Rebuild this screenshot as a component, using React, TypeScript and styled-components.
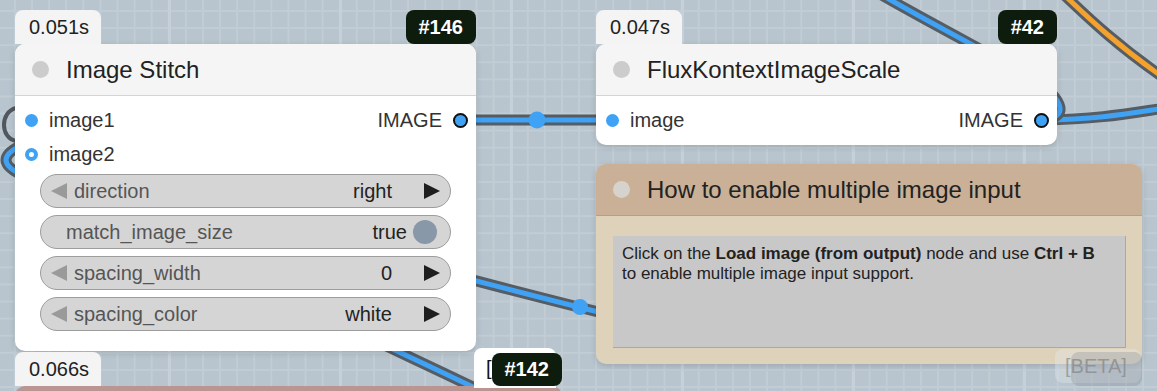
import styled, { createGlobalStyle } from "styled-components";

const GlobalStyle = createGlobalStyle`
	html, body {
		margin: 0;
		padding: 0;
		background: #b8c5ce;
	}
	* {
		box-sizing: border-box;
	}
`;

const Canvas = styled.div`
	position: relative;
	width: 1157px;
	height: 391px;
	overflow: hidden;
	font-family: "Liberation Sans", Arial, sans-serif;
	background-color: #b8c5ce;
	background-image:
		linear-gradient(to right, #c5d0d8 3px, transparent 3px),
		linear-gradient(to right, #c1ccd4 2px, transparent 2px),
		linear-gradient(to bottom, #c1ccd4 2px, transparent 2px);
	background-size: 171px 100%, 17.1px 17.1px, 17.1px 17.1px;
	background-position: 510px 0, 14px 0, 0 10px;
`;

const WireLayer = styled.svg`
	position: absolute;
	inset: 0;
	width: 100%;
	height: 100%;
`;

const Node = styled.div<{ $x: number; $y: number; $w: number }>`
	position: absolute;
	left: ${(p) => p.$x}px;
	top: ${(p) => p.$y}px;
	width: ${(p) => p.$w}px;
	display: flex;
	flex-direction: column;
`;

const BadgeRow = styled.div`
	position: relative;
	display: flex;
	justify-content: space-between;
	align-items: flex-end;
	height: 34px;
`;

const TimeBadge = styled.div`
	display: flex;
	align-items: center;
	height: 34px;
	padding: 0 12px 0 14px;
	background: #f4f4f4;
	color: #222;
	font-size: 20px;
	border-radius: 8px 8px 0 0;
`;

const IdBadge = styled.div<{ $h?: number }>`
	position: relative;
	z-index: 2;
	display: flex;
	align-items: center;
	height: ${(p) => p.$h ?? 34}px;
	padding: 0 13px;
	background: #0e1c0e;
	color: #fff;
	font-size: 20px;
	font-weight: 700;
	border-radius: 8px;
`;

const HiddenBadge = styled.div`
	position: absolute;
	right: 6px;
	top: -4px;
	height: 40px;
	width: 82px;
	padding: 0 12px;
	display: flex;
	align-items: center;
	background: #fff;
	color: #111;
	font-size: 20px;
	border-radius: 8px 8px 0 0;
`;

const Card = styled.div<{ $bg?: string }>`
	background: ${(p) => p.$bg ?? "#fff"};
	border-radius: 10px;
	overflow: hidden;
	box-shadow: 0 2px 6px rgba(0, 0, 0, 0.15);
`;

const TitleBar = styled.div<{ $bg?: string; $line?: string }>`
	display: flex;
	align-items: center;
	height: 52px;
	padding-left: 17px;
	gap: 17px;
	background: ${(p) => p.$bg ?? "#f5f5f5"};
	border-bottom: 1.5px solid ${(p) => p.$line ?? "#d4d4d4"};
	color: #222;
	font-size: 24px;
`;

const StatusDot = styled.span<{ $c?: string }>`
	width: 17px;
	height: 17px;
	border-radius: 50%;
	background: ${(p) => p.$c ?? "#cccccc"};
	flex-shrink: 0;
`;

const Body = styled.div<{ $pb: number }>`
	display: flex;
	flex-direction: column;
	padding: 7px 0 ${(p) => p.$pb}px;
`;

const SlotRow = styled.div`
	display: flex;
	align-items: center;
	justify-content: space-between;
	height: 34px;
	font-size: 20px;
	color: #333;
`;

const InSlot = styled.div`
	display: flex;
	align-items: center;
	gap: 11px;
	padding-left: 10px;
`;

const InDot = styled.span<{ $ring?: boolean }>`
	width: 13px;
	height: 13px;
	border-radius: 50%;
	background: ${(p) => (p.$ring ? "#fff" : "#3fa2f4")};
	border: ${(p) => (p.$ring ? "4px solid #3fa2f4" : "none")};
`;

const OutSlot = styled.div`
	display: flex;
	align-items: center;
	gap: 11px;
	padding-right: 8px;
`;

const OutDot = styled.span`
	width: 15px;
	height: 15px;
	border-radius: 50%;
	background: #3fa2f4;
	border: 2px solid #111;
`;

const Widgets = styled.div`
	display: flex;
	flex-direction: column;
	gap: 7px;
	margin-top: 3px;
	padding: 0 25px;
`;

const Widget = styled.div<{ $toggle?: boolean }>`
	display: flex;
	align-items: center;
	height: 34px;
	padding: 0 ${(p) => (p.$toggle ? 13 : 10)}px 0 ${(p) => (p.$toggle ? 25 : 10)}px;
	background: #d5d5d5;
	border: 1.5px solid #9d9d9d;
	border-radius: 17px;
	font-size: 20px;
`;

const Label = styled.span`
	flex: 1;
	color: #555;
	margin-left: 7px;
`;

const ToggleLabel = styled.span`
	flex: 1;
	color: #555;
`;

const Value = styled.span<{ $mr: number }>`
	color: #222;
	margin-right: ${(p) => p.$mr}px;
`;

const Knob = styled.span`
	width: 24px;
	height: 24px;
	border-radius: 50%;
	background: #8898a8;
`;

const NoteBody = styled.div`
	padding: 20px 16px 16px 17px;
`;

const NoteText = styled.div`
	height: 112px;
	padding: 8px 9px;
	background: #c8c8c8;
	border-right: 1px solid #a8a8a8;
	border-bottom: 1px solid #a8a8a8;
	color: #222;
	font-size: 17px;
	line-height: 20px;
`;

const Peek = styled.div`
	height: 10px;
	border-radius: 10px 10px 0 0;
	background: #bb9592;
`;

const Beta = styled.div`
	position: absolute;
	left: 1055px;
	top: 349px;
	width: 86px;
	height: 34px;
	border-radius: 8px;
	background: rgba(230, 235, 238, 0.35);
	display: flex;
	align-items: center;
	padding-left: 10px;
	color: rgba(150, 150, 150, 0.85);
	font-size: 20px;
	&::after {
		content: "";
		position: absolute;
		left: 16px;
		top: 3px;
		width: 71px;
		height: 34px;
		border-radius: 8px;
		background: rgba(110, 120, 130, 0.25);
	}
`;

function ArrowLeft() {
	return (
		<svg width="16" height="16" viewBox="0 0 16 16">
			<path d="M0 8 L16 0 L16 16 Z" fill="#9a9a9a" />
		</svg>
	);
}

function ArrowRight() {
	return (
		<svg width="16" height="16" viewBox="0 0 16 16">
			<path d="M16 8 L0 0 L0 16 Z" fill="#1e1e1e" />
		</svg>
	);
}

function Wire({ d, color = "#3fa2f4" }: { d: string; color?: string }) {
	return (
		<g fill="none" strokeLinecap="round">
			<path d={d} stroke="#555c63" strokeWidth={11} />
			<path d={d} stroke={color} strokeWidth={5} />
		</g>
	);
}

function Combo({ label, value }: { label: string; value: string }) {
	return (
		<Widget>
			<ArrowLeft />
			<Label>{label}</Label>
			<Value $mr={32}>{value}</Value>
			<ArrowRight />
		</Widget>
	);
}

export default function App() {
	return (
		<Canvas>
			<GlobalStyle />
			<WireLayer viewBox="0 0 1157 391">
				<path d="M16 108 C0 112 0 138 16 141" stroke="#50575d" strokeWidth={4} fill="none" />
				<Wire d="M20 146 Q-8 160 20 174" />
				<Wire d="M300 240 C420 262 520 296 700 336" />
				<circle cx="580" cy="307" r="8" fill="#3fa2f4" />
				<Wire d="M330 318 C360 335 440 370 520 410" />
				<Wire d="M460 120 L612 120" />
				<circle cx="537" cy="120" r="8.5" fill="#3fa2f4" />
				<Wire d="M1042 120 C1100 119 1125 114 1165 108" />
				<Wire d="M1042 120 C1072 118 1064 96 1022 72 C990 54 925 20 880 -6" />
				<Wire d="M1055 -14 C1090 20 1120 48 1170 82" color="#f4a22d" />
			</WireLayer>

			<Node $x={15} $y={10} $w={461}>
				<BadgeRow>
					<TimeBadge>0.051s</TimeBadge>
					<IdBadge>#146</IdBadge>
				</BadgeRow>
				<Card>
					<TitleBar>
						<StatusDot />
						Image Stitch
					</TitleBar>
					<Body $pb={20}>
						<SlotRow>
							<InSlot>
								<InDot />
								image1
							</InSlot>
							<OutSlot>
								IMAGE
								<OutDot />
							</OutSlot>
						</SlotRow>
						<SlotRow>
							<InSlot>
								<InDot $ring />
								image2
							</InSlot>
						</SlotRow>
						<Widgets>
							<Combo label="direction" value="right" />
							<Widget $toggle>
								<ToggleLabel>match_image_size</ToggleLabel>
								<Value $mr={6}>true</Value>
								<Knob />
							</Widget>
							<Combo label="spacing_width" value="0" />
							<Combo label="spacing_color" value="white" />
						</Widgets>
					</Body>
				</Card>
			</Node>

			<Node $x={596} $y={10} $w={461}>
				<BadgeRow>
					<TimeBadge>0.047s</TimeBadge>
					<IdBadge>#42</IdBadge>
				</BadgeRow>
				<Card>
					<TitleBar>
						<StatusDot />
						FluxKontextImageScale
					</TitleBar>
					<Body $pb={8}>
						<SlotRow>
							<InSlot>
								<InDot />
								image
							</InSlot>
							<OutSlot>
								IMAGE
								<OutDot />
							</OutSlot>
						</SlotRow>
					</Body>
				</Card>
			</Node>

			<Node $x={596} $y={164} $w={546}>
				<Card $bg="#ded3ba">
					<TitleBar $bg="#c9b096" $line="#b3a089">
						<StatusDot $c="#d6d3cf" />
						How to enable multiple image input
					</TitleBar>
					<NoteBody>
						<NoteText>
							Click on the <b>Load image (from output)</b> node and use <b>Ctrl + B</b>
							<br />
							to enable multiple image input support.
						</NoteText>
					</NoteBody>
				</Card>
			</Node>

			<Node $x={15} $y={352} $w={547}>
				<BadgeRow>
					<TimeBadge>0.066s</TimeBadge>
					<HiddenBadge>[</HiddenBadge>
					<IdBadge $h={33}>#142</IdBadge>
				</BadgeRow>
				<Peek />
			</Node>

			<Beta>[BETA]</Beta>
		</Canvas>
	);
}
